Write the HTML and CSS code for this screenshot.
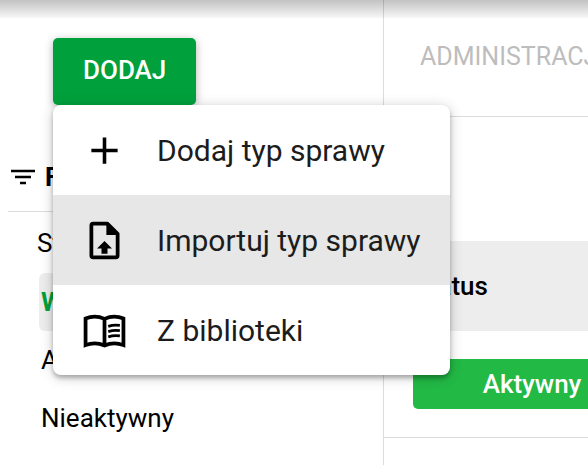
FILE: index.html
```html
<!DOCTYPE html>
<html lang="pl">
<head>
  <meta charset="UTF-8">
  <title>Typy spraw</title>
  <link rel="stylesheet" href="styles.css">
</head>
<body>
  <div class="page">
    <aside class="sidebar">
      <div class="add">
        <button class="add-button" type="button">DODAJ</button>
        <div class="menu">
          <button class="menu-item" type="button">
            <svg class="menu-icon" viewBox="0 0 24 24"><path d="M5 12h14M12 5v14" fill="none" stroke="#000" stroke-width="1.9"/></svg>
            Dodaj typ sprawy
          </button>
          <button class="menu-item active" type="button">
            <svg class="menu-icon" viewBox="0 0 24 24">
              <path d="M13.5 3H6Q5 3 5 4v16q0 1 1 1h12q1 0 1-1V8.500Z" fill="none" stroke="#000" stroke-width="2" stroke-linejoin="round"/>
              <path d="M13 3h1l5 5v1h-6ZM12 12.300l4 3.900h-2.400V19h-3.200v-2.800H8Z"/>
            </svg>
            Importuj typ sprawy
          </button>
          <button class="menu-item" type="button">
            <svg class="menu-icon" viewBox="0 0 24 24">
              <path d="M12 20Q7 17.800 1.900 19.800V5.600Q7 3.500 12 5.800Q17 3.500 22.100 5.600V19.800Q17 17.800 12 20ZM12 5.800V20" fill="none" stroke="#000" stroke-width="2"/>
              <path d="M14 9.800q3-1 6.200-.5M14 12.600q3-1 6.200-.5M14 15.400q3-1 6.200-.5" fill="none" stroke="#000" stroke-width="1.500"/>
            </svg>
            Z biblioteki
          </button>
        </div>
      </div>

      <div class="filters">
        <h2 class="filters-title">
          <svg class="filter-icon" viewBox="0 0 24 16"><path d="M0 2h24M4 8h16M9 14h6" stroke="#000" stroke-width="2.400"/></svg>
          Filtry
        </h2>
        <h3 class="filter-group">Status</h3>
        <ul class="filter-list">
          <li><a class="filter selected" href="#">Wszystkie</a></li>
          <li><a class="filter" href="#">Aktywny</a></li>
          <li><a class="filter" href="#">Nieaktywny</a></li>
        </ul>
      </div>
    </aside>

    <main class="content">
      <nav class="tabs">
        <a class="tab" href="#">ADMINISTRACJA</a>
      </nav>
      <table class="cases">
        <thead>
          <tr><th>Status</th></tr>
        </thead>
        <tbody>
          <tr><td><span class="badge">Aktywny</span></td></tr>
        </tbody>
      </table>
    </main>
  </div>
</body>
</html>
```
FILE: styles.css
```css
* { box-sizing: border-box; }
body { margin: 0; font-family: Roboto, sans-serif; font-size: 26px; line-height: 30px; color: #000; background: #fff; }
button { border: 0; font-family: inherit; cursor: pointer; }
a { color: inherit; text-decoration: none; }

.page { position: relative; display: flex; min-height: 100vh; overflow: hidden; }
.page::before { content: ""; position: absolute; top: 0; left: 0; right: 0; height: 18px; background: linear-gradient(rgba(0,0,0,0.24), rgba(0,0,0,0.03)); }

.sidebar { flex: 0 0 384px; padding-top: 38px; border-right: 1px solid #dcdcdc; }
.add { position: relative; margin-left: 53px; width: max-content; }
.add-button { display: block; height: 67px; padding: 0 30px 3px; border-radius: 5px; background: #00a03c; color: #fff; font-size: 26px; font-weight: 500; box-shadow: 0 2px 8px rgba(0,0,0,0.3); }

.menu { position: absolute; z-index: 2; top: 100%; left: 0; border-radius: 8px; background: #fff; box-shadow: 0 3px 4px rgba(0,0,0,0.25), 0 2px 14px rgba(0,0,0,0.2); }
.menu-item { display: flex; align-items: center; gap: 30px; width: 100%; height: 90px; padding: 0 29px; background: none; color: #1c1c1c; font-size: 30px; white-space: nowrap; }
.menu-item.active { background: #e7e7e7; }
.menu-icon { flex: none; width: 45px; height: 45px; }

.filters { margin: 38px 8px 0; }
.filters-title { display: flex; align-items: center; gap: 10px; height: 69px; margin: 0; padding-left: 3px; border-bottom: 1px solid #dcdcdc; font-size: 26px; font-weight: 700; }
.filter-icon { width: 24px; height: 16px; }
.filter-group { margin: 0; padding: 16px 29px 15px; font-size: 26px; font-weight: 400; }
.filter-list { margin: 0 0 0 31px; padding: 0; list-style: none; }
.filter { display: block; padding: 14px 2px; border-radius: 6px; }
.filter.selected { background: #ededed; color: #00a03c; font-weight: 700; }

.content { flex: 1; min-width: 0; }
.tabs { height: 117px; padding: 41px 36px; border-bottom: 1px solid #dcdcdc; }
.tab { color: #bdbdbd; font-size: 25px; }

.cases { width: 100%; margin-top: 124px; border-collapse: collapse; }
.cases th { height: 90px; padding: 0 29px; background: #ededed; font-weight: 500; text-align: left; }
.cases td { height: 106px; padding: 0 29px; border-bottom: 1px solid #dcdcdc; }
.badge { display: block; min-width: 238px; padding: 10px; border-radius: 5px; background: #22b945; color: #fff; font-weight: 500; text-align: center; }
```
